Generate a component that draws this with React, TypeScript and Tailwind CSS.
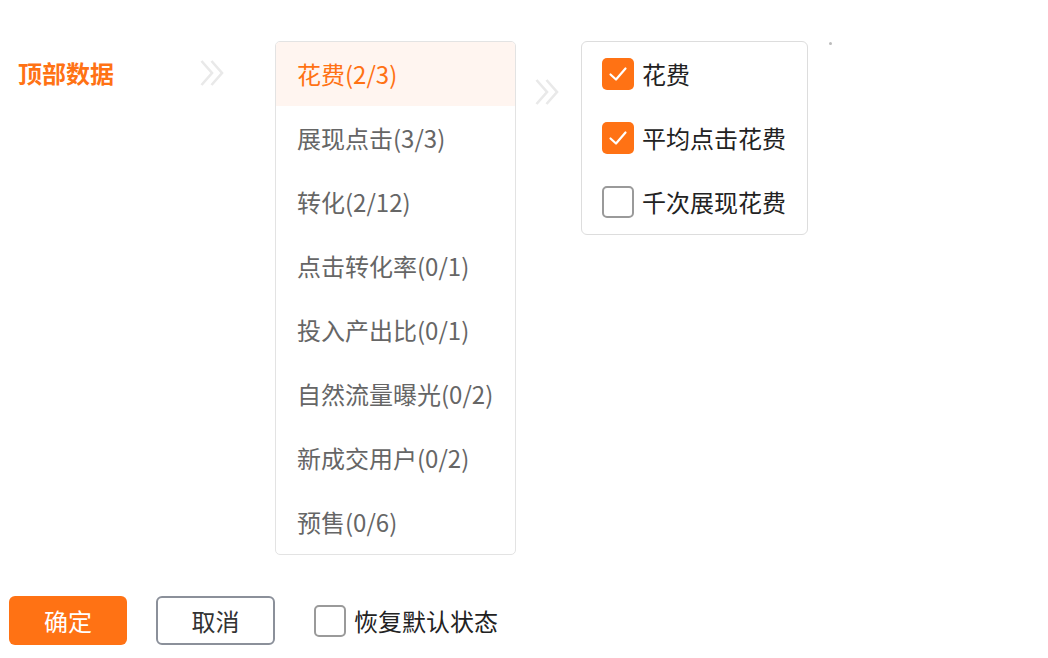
const categories = [
  '花费(2/3)',
  '展现点击(3/3)',
  '转化(2/12)',
  '点击转化率(0/1)',
  '投入产出比(0/1)',
  '自然流量曝光(0/2)',
  '新成交用户(0/2)',
  '预售(0/6)',
]

const metrics = [
  { title: '花费', checked: true },
  { title: '平均点击花费', checked: true },
  { title: '千次展现花费', checked: false },
]

function Chevrons() {
  return (
    <svg width="26" height="26" viewBox="0 0 26 26" fill="none" stroke="#e9e9e9" strokeWidth="2.6">
      <path d="M1.5 1 L12 13 L1.5 25" />
      <path d="M11.5 1 L22 13 L11.5 25" />
    </svg>
  )
}

function Checkbox({ checked }: { checked: boolean }) {
  if (checked) {
    return (
      <span className="flex h-[32px] w-[32px] shrink-0 items-center justify-center rounded-[5px] bg-[#ff7214]">
        <svg width="32" height="32" viewBox="0 0 32 32" fill="none" stroke="#fff" strokeWidth="2.2" strokeLinecap="round" strokeLinejoin="round">
          <path d="M8.5 16.5 L14 21.5 L23.5 10.5" />
        </svg>
      </span>
    )
  }
  return <span className="h-[32px] w-[32px] shrink-0 rounded-[5px] border-2 border-[#9a9a9a] bg-white" />
}

export default function App() {
  return (
    <div className="relative h-[658px] w-[1048px] bg-white font-['Noto_Sans_CJK_SC','Noto_Sans',sans-serif]">
      <div className="flex items-start pt-[41px]">
        <div className="ml-[18px] flex h-[64px] w-[182px] items-center text-[24px] font-bold text-[#ff7214]">
          顶部数据
        </div>
        <div className="flex h-[64px] w-[75px] items-center">
          <Chevrons />
        </div>

        <div className="w-[241px] overflow-hidden rounded-[5px] border border-[#e3e3e3]">
          {categories.map((item, i) => (
            <div
              key={item}
              className={
                i === 0
                  ? 'flex h-[64px] items-center bg-[#fff5f0] pl-[21px] text-[24px] text-[#ff7214]'
                  : 'flex h-[64px] items-center pl-[21px] text-[24px] text-[#666666]'
              }
            >
              {item}
            </div>
          ))}
        </div>

        <div className="flex w-[65px] pl-[19px] pt-[38px]">
          <Chevrons />
        </div>

        <div className="w-[227px] rounded-[6px] border border-[#dddddd] pl-[20px]">
          {metrics.map((m) => (
            <div key={m.title} className="flex h-[64px] items-center gap-[8px] text-[24px] text-[#222222]">
              <Checkbox checked={m.checked} />
              <span>{m.title}</span>
            </div>
          ))}
        </div>

        <span className="ml-[21px] mt-[1px] h-[3px] w-[3px] rounded-full bg-[#bbbbbb]" />
      </div>

      <div className="mt-[41px] flex items-center pl-[9px]">
        <button className="flex h-[49px] w-[118px] items-center justify-center rounded-[6px] bg-[#ff7214] text-[24px] text-white">
          确定
        </button>
        <button className="ml-[29px] flex h-[49px] w-[119px] items-center justify-center rounded-[6px] border-2 border-[#8b909a] bg-white text-[24px] text-[#333333]">
          取消
        </button>
        <label className="ml-[39px] flex items-center gap-[8px] text-[24px] text-[#222222]">
          <Checkbox checked={false} />
          <span>恢复默认状态</span>
        </label>
      </div>
    </div>
  )
}
